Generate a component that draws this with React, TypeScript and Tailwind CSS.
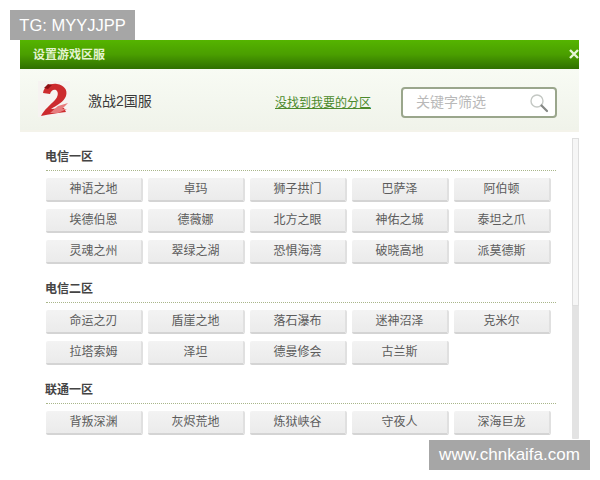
import React from 'react';

const FONT = '"Liberation Sans", "Noto Sans CJK SC", sans-serif';

const sections = [
  {
    title: '电信一区',
    servers: ['神语之地', '卓玛', '狮子拱门', '巴萨泽', '阿伯顿', '埃德伯恩', '德薇娜', '北方之眼', '神佑之城', '泰坦之爪', '灵魂之州', '翠绿之湖', '恐惧海湾', '破晓高地', '派莫德斯'],
  },
  {
    title: '电信二区',
    servers: ['命运之刃', '盾崖之地', '落石瀑布', '迷神沼泽', '克米尔', '拉塔索姆', '泽坦', '德曼修会', '古兰斯'],
  },
  {
    title: '联通一区',
    servers: ['背叛深渊', '灰烬荒地', '炼狱峡谷', '守夜人', '深海巨龙'],
  },
];

const Logo = () => (
  <svg width="32" height="36" viewBox="0 0 32 36" className="blur-[0.4px]">
    <rect width="32" height="36" fill="#f6f3f1" />
    <path d="M5 12 C6 5 13 2 19 3 C26 4 30 9 28 15 C26 21 19 24 13 28 L26 27 L28 31 C20 32 11 33 3 35 C6 29 12 24 17 19 C20 16 21 11 18 9 C15 8 13 10 12 13 Z" fill="#cc2a2e" />
    <path d="M6 7 L10 3 L14 4 L10 8 Z" fill="#8e1014" />
    <path d="M12 32 L20 25 L30 22 L24 28 L29 28 L20 32 Z" fill="#e77b7e" />
  </svg>
);

const Search = () => (
  <svg width="20" height="20" viewBox="0 0 20 20" fill="none">
    <circle cx="8" cy="8" r="6" stroke="#c4c8c4" strokeWidth="1.4" />
    <path d="M12.5 12.5 L18 18" stroke="#858885" strokeWidth="2.2" strokeLinecap="round" />
  </svg>
);

const ServerButton = ({ name }: { name: string }) => (
  <div className="w-[97px] h-[24px] flex items-center justify-center rounded-[2px] bg-gradient-to-b from-[#f3f3f3] to-[#ebebeb] border-b-2 border-r-2 border-b-[#d4d4d4] border-r-[#e0e0e0] text-[12px] text-[#5c5c5c]">
    {name}
  </div>
);

export default function App() {
  return (
    <div className="relative w-[600px] h-[480px] bg-white overflow-hidden" style={{ fontFamily: FONT }}>
      <div className="absolute left-[10px] top-[10px] w-[125px] h-[30px] bg-[#a6a6a6] flex items-center justify-center text-[16.5px] text-white z-10">
        TG: MYYJJPP
      </div>
      <div className="absolute left-[429px] top-[440px] w-[161px] h-[30px] bg-[#a6a6a6] flex items-center justify-center text-[17px] text-white z-10">
        www.chnkaifa.com
      </div>

      <div className="ml-[20px] pt-[40px] w-[559px]">
        <div className="h-[29px] flex items-center justify-between bg-gradient-to-b from-[#55b400] via-[#4a9e00] to-[#2f7000]">
          <span className="pl-[13px] text-[12px] font-bold text-[#e4f3cf]">设置游戏区服</span>
          <svg width="10" height="10" viewBox="0 0 10 10" className="-translate-y-[1px]">
            <path d="M1 1 L9 9 M9 1 L1 9 " stroke="#e6f5d5" strokeWidth="2.4" />
          </svg>
        </div>

        <div className="h-[63px] flex items-center bg-gradient-to-b from-[#f8fbf4] to-[#f0f3ea] border-b-2 border-b-[#f4f3ea]">
          <div className="ml-[18px] mt-[-1px]"><Logo /></div>
          <span className="ml-[18px] w-[187px] text-[14px] text-[#3a3a3a] translate-y-[2px]">激战2国服</span>
          <span className="w-[126px] text-[12px] text-[#4c8a2b] underline translate-y-[3px]">没找到我要的分区</span>
          <div className="w-[156px] h-[31px] flex items-center justify-between pl-[13px] pr-[6px] bg-white border-2 border-[#9aa68c] rounded-[4px] translate-y-[3px]">
            <span className="text-[14px] text-[#b9b9b9]">关键字筛选</span>
            <Search />
          </div>
        </div>

        <div className="relative flex">
          <div className="w-[536px] ml-[26px] pt-[16px] flex flex-col gap-[16px]">
            {sections.map((section) => (
              <div key={section.title}>
                <div className="-ml-[1px] h-[19px] text-[12px] font-bold text-[#444] leading-[19px]">{section.title}</div>
                <div className="mt-[3px] w-[510px] border-t border-dotted border-t-[#a9b68a]" />
                <div className="mt-[7px] w-[510px] grid grid-cols-[repeat(5,97px)] gap-x-[5px] gap-y-[7px]">
                  {section.servers.map((name) => (
                    <ServerButton key={name} name={name} />
                  ))}
                </div>
              </div>
            ))}
          </div>
          <div className="absolute right-0 top-[6px] w-[7px] h-[301px] bg-[#e3e3e3] rounded-[1px]">
            <div className="h-[168px] bg-[#f6f6f6] border border-[#dedede]" />
          </div>
        </div>
      </div>
    </div>
  );
}
